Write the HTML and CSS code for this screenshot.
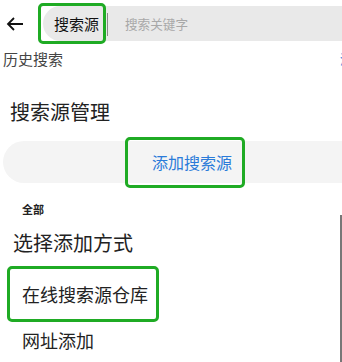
FILE: index.html
```html
<!DOCTYPE html>
<html lang="zh-CN">
<head>
    <meta charset="UTF-8">
    <meta name="viewport" content="width=device-width, initial-scale=1">
    <title>搜索源</title>
    <link rel="stylesheet" href="styles.css">
</head>
<body>
    <div class="screen">
        <div class="top-bar">
            <span class="back">
                <svg width="18" height="14" viewBox="0 0 18 14"><path d="M17 7H2M8 1L2 7l6 6" fill="none" stroke="#111" stroke-width="1.8"/></svg>
            </span>
            <div class="search-box">
                <span class="source-label mark">搜索源</span>
                <span class="divider"></span>
                <span class="placeholder">搜索关键字</span>
            </div>
        </div>

        <div class="history-row">
            <span class="history-title">历史搜索</span>
            <span class="history-clear">清除</span>
        </div>

        <h2 class="section-title">搜索源管理</h2>
        <div class="add-pill">
            <span class="add-btn mark">添加搜索源</span>
        </div>

        <div class="group-label">全部</div>
        <h2 class="section-title second">选择添加方式</h2>
        <div class="option mark-row">
            <span class="option-item mark">在线搜索源仓库</span>
        </div>
        <div class="option">
            <span class="option-item">网址添加</span>
        </div>

        <div class="scroll-line"></div>
    </div>
</body>
</html>
```

FILE: styles.css
```css
:root {
    --text-color: #222;
    --muted-color: #444;
    --hint-color: #a8a8a8;
    --link-color: #2b7bd9;
    --mark-color: #1fab24;
    --bar-color: #e9e9e9;
    --pill-color: #f4f4f4;
}

body {
    margin: 0;
    padding: 0;
    background: #fff;
    font-family: "Noto Sans CJK SC", "Noto Sans", sans-serif;
    color: var(--text-color);
}

.screen {
    position: relative;
    width: 342px;
    height: 362px;
    overflow: hidden;
}

.top-bar {
    display: flex;
    align-items: center;
    height: 35px;
    padding-top: 6px;
}

.back {
    display: flex;
    width: 43px;
    padding-left: 6px;
    box-sizing: border-box;
}

.search-box {
    flex: 1;
    display: flex;
    align-items: center;
    height: 35px;
    background: var(--bar-color);
    border-radius: 18px 0 0 18px;
}

/* green highlight frame drawn over the element */
.mark {
    position: relative;
}

.mark::after {
    content: '';
    position: absolute;
    top: -3px;
    right: -3px;
    bottom: -3px;
    left: -3px;
    border: 3px solid var(--mark-color);
    border-radius: 5px;
}

.source-label {
    display: flex;
    align-items: center;
    height: 35px;
    width: 62px;
    box-sizing: border-box;
    padding-left: 13px;
    margin-left: -2px;
    font-size: 15px;
    color: #111;
}

.divider {
    width: 1px;
    height: 23px;
    margin-left: 4px;
    margin-top: 1px;
    background: #888;
}

.placeholder {
    margin-left: 17px;
    font-size: 12.6px;
    color: var(--hint-color);
}

.history-row {
    display: flex;
    justify-content: space-between;
    margin-right: -24px;
    padding: 7px 0 0 3px;
    line-height: 22px;
}

.history-title {
    font-size: 15px;
    color: var(--muted-color);
}

.history-clear {
    font-size: 13px;
    color: var(--link-color);
}

.section-title {
    margin: 28px 0 0 10px;
    font-size: 20px;
    font-weight: normal;
    line-height: 28px;
}

.section-title.second {
    margin: 12px 0 0 13px;
}

.add-pill {
    display: flex;
    align-items: center;
    margin: 15px -40px 0 3px;
    height: 42px;
    padding-left: 125px;
    background: var(--pill-color);
    border-radius: 21px;
}

.add-btn {
    display: flex;
    align-items: center;
    height: 45px;
    width: 114px;
    box-sizing: border-box;
    padding-left: 24px;
    font-size: 16px;
    color: var(--link-color);
}

.group-label {
    margin: 18px 0 0 22px;
    font-size: 11px;
    font-weight: bold;
    line-height: 16px;
}

.option {
    display: flex;
    margin-left: 10px;
}

.mark-row {
    margin-top: 12px;
}

.option-item {
    display: flex;
    align-items: center;
    height: 50px;
    width: 146px;
    box-sizing: border-box;
    padding-left: 12px;
    font-size: 18px;
}

.option + .option .option-item {
    height: 42px;
}

.scroll-line {
    position: absolute;
    right: 0;
    top: 215px;
    bottom: 0;
    width: 2px;
    background: #777;
}
```
